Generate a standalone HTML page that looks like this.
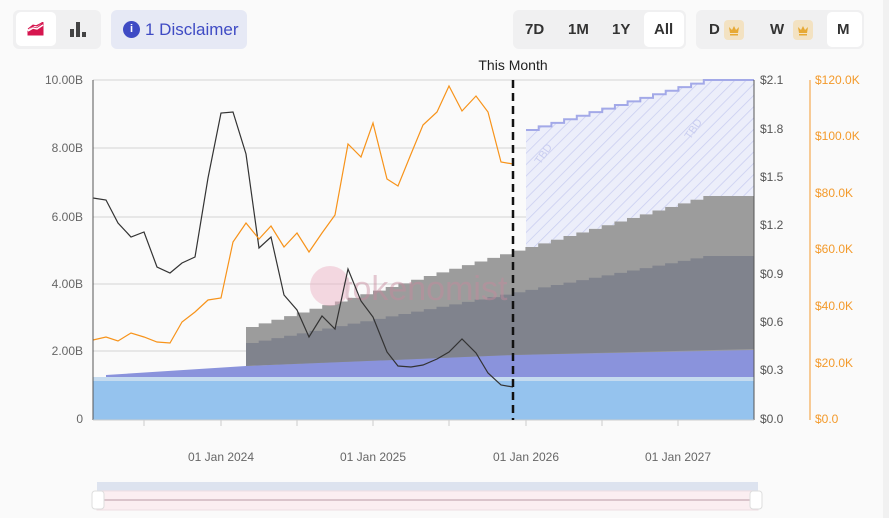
<!DOCTYPE html>
<html><head><meta charset="utf-8">
<style>
body{margin:0;width:889px;height:518px;background:#fafafa;font-family:"Liberation Sans",sans-serif;overflow:hidden;position:relative}
.grp{position:absolute;background:#f0f0f1;border-radius:6px}
.btn{position:absolute;font-weight:bold;font-size:15px;color:#333;text-align:center}
.sel{background:#fff;border-radius:5px}
.crown{display:inline-block;width:20px;height:20px;background:#f3e2c2;border-radius:4px;vertical-align:middle;position:relative;margin-left:4px}
</style></head><body>
<div class="grp" style="left:13px;top:10px;width:88px;height:39px"></div>
<div class="sel" style="position:absolute;left:16px;top:12px;width:40px;height:34px"></div>
<svg style="position:absolute;left:27px;top:22px" width="18" height="14" viewBox="0 0 18 14"><path d="M1 9 L6 5 L10 6 L16 1 L16 13 L1 13 Z M1 7 L6 3 L10 4 L16 0" fill="#d6164f" stroke="#d6164f" stroke-width="1"/><path d="M1 9 L6 6 L10 7 L16 3" stroke="#fff" stroke-width="1.5" fill="none"/></svg>
<svg style="position:absolute;left:70px;top:21px" width="16" height="16"><rect x="0" y="8" width="4" height="8" fill="#444"/><rect x="6" y="1" width="4" height="15" fill="#444"/><rect x="12" y="11" width="4" height="5" fill="#444"/></svg>
<div style="position:absolute;left:111px;top:10px;width:136px;height:39px;background:#e6e9f5;border-radius:6px"></div>
<div style="position:absolute;left:123px;top:21px;width:17px;height:17px;border-radius:50%;background:#3f4bc4;color:#fff;font-size:11px;font-weight:bold;text-align:center;line-height:17px">i</div>
<div style="position:absolute;left:145px;top:20px;font-size:17px;color:#3f4bc4">1 Disclaimer</div>

<div class="grp" style="left:513px;top:10px;width:173px;height:39px"></div>
<div class="sel" style="position:absolute;left:644px;top:12px;width:40px;height:35px"></div>
<div class="btn" style="left:525px;top:21px">7D</div>
<div class="btn" style="left:568px;top:21px">1M</div>
<div class="btn" style="left:612px;top:21px">1Y</div>
<div class="btn" style="left:654px;top:21px">All</div>
<div class="grp" style="left:696px;top:10px;width:168px;height:39px"></div>
<div class="sel" style="position:absolute;left:827px;top:12px;width:35px;height:35px"></div>
<div class="btn" style="left:709px;top:21px">D</div>
<div class="crown" style="position:absolute;left:724px;top:20px;margin:0"><svg width="20" height="20"><path d="M5 7 L8 10 L10 6 L12 10 L15 7 L14 13 L6 13 Z M6 14 H14 V15.5 H6 Z" fill="#e7a934"/></svg></div>
<div class="btn" style="left:770px;top:21px">W</div>
<div class="crown" style="position:absolute;left:793px;top:20px;margin:0"><svg width="20" height="20"><path d="M5 7 L8 10 L10 6 L12 10 L15 7 L14 13 L6 13 Z M6 14 H14 V15.5 H6 Z" fill="#e7a934"/></svg></div>
<div class="btn" style="left:837px;top:21px">M</div>
<div style="position:absolute;left:883px;top:0;width:6px;height:518px;background:#f1f1f1"></div>

<svg id="ch" style="position:absolute;left:0;top:0" width="889" height="518" font-family="Liberation Sans, sans-serif">
<defs><pattern id="hp" width="8" height="8" patternUnits="userSpaceOnUse" patternTransform="rotate(45)"><rect width="8" height="8" fill="#eceefa"/><line x1="0" y1="0" x2="0" y2="8" stroke="#c9cdf0" stroke-width="1.5"/></pattern></defs>
<g stroke="#dcdcdc" stroke-width="1.3">
<line x1="93" y1="80" x2="754" y2="80"/><line x1="93" y1="148" x2="754" y2="148"/><line x1="93" y1="217" x2="754" y2="217"/><line x1="93" y1="284" x2="754" y2="284"/><line x1="93" y1="351" x2="754" y2="351"/></g>
<g fill="#666" font-size="12" text-anchor="end">
<text x="83" y="84">10.00B</text><text x="83" y="152">8.00B</text><text x="83" y="221">6.00B</text><text x="83" y="288">4.00B</text><text x="83" y="355">2.00B</text><text x="83" y="423">0</text></g>
<g fill="#555" font-size="12">
<text x="760" y="84">$2.1</text><text x="760" y="133">$1.8</text><text x="760" y="181">$1.5</text><text x="760" y="229">$1.2</text><text x="760" y="278">$0.9</text><text x="760" y="326">$0.6</text><text x="760" y="374">$0.3</text><text x="760" y="423">$0.0</text></g>
<g fill="#f39a2b" font-size="12">
<text x="815" y="84">$120.0K</text><text x="815" y="140">$100.0K</text><text x="815" y="197">$80.0K</text><text x="815" y="253">$60.0K</text><text x="815" y="310">$40.0K</text><text x="815" y="367">$20.0K</text><text x="815" y="423">$0.0</text></g>
<line x1="810" y1="80" x2="810" y2="420" stroke="#f6b15f" stroke-width="1.3"/>
<g id="areas"></g>
<g opacity="0.45"><circle cx="330" cy="286" r="20" fill="#ecaec2"/><text x="343" y="300" font-size="34" fill="#c88a9e">tokenomist</text></g>
<rect x="93" y="377" width="661" height="43" fill="#95c3ee"/>
<rect x="93" y="377" width="661" height="4" fill="#c5dbef"/>
<polyline fill="none" stroke="#333" stroke-width="1.2" points="93,198 106,200 118,223 131,237 144,232 157,267 170,273 182,263 195,257 208,178 221,113 233,112 246,154 259,248 271,237 284,295 297,310 309,337 322,316 335,329 348,269 361,301 373,317 387,352 398,366 411,367 423,365 437,359 449,352 462,339 476,353 488,373 501,385 513,387"/>
<polyline fill="none" stroke="#f7931a" stroke-width="1.2" points="93,340 106,337 118,341 131,333 144,337 157,342 170,343 182,322 195,312 208,300 221,298 233,242 246,223 259,239 271,226 284,247 297,233 309,252 322,233 335,215 348,144 361,157 373,123 387,179 398,186 411,154 423,125 437,112 449,86 462,111 476,96 488,112 501,162 513,164"/>
<line x1="93" y1="80" x2="93" y2="420" stroke="#555"/>
<line x1="754" y1="80" x2="754" y2="420" stroke="#555"/>
<line x1="93" y1="420" x2="754" y2="420" stroke="#ccc"/>
<g stroke="#ccc"><line x1="144" y1="420" x2="144" y2="426"/><line x1="221" y1="420" x2="221" y2="426"/><line x1="297" y1="420" x2="297" y2="426"/><line x1="373" y1="420" x2="373" y2="426"/><line x1="449" y1="420" x2="449" y2="426"/><line x1="526" y1="420" x2="526" y2="426"/><line x1="602" y1="420" x2="602" y2="426"/><line x1="678" y1="420" x2="678" y2="426"/></g>
<line x1="513" y1="80" x2="513" y2="420" stroke="#111" stroke-width="2.5" stroke-dasharray="8,5"/>
<text x="513" y="70" text-anchor="middle" font-size="14" fill="#222">This Month</text>
<g fill="#666" font-size="12" text-anchor="middle"><text x="221" y="461">01 Jan 2024</text><text x="373" y="461">01 Jan 2025</text><text x="526" y="461">01 Jan 2026</text><text x="678" y="461">01 Jan 2027</text></g>
<rect x="97" y="482" width="661" height="9" fill="#dde3ef"/>
<rect x="97" y="491" width="661" height="19" fill="#fbeef1" stroke="#eedde2"/>
<line x1="100" y1="500" x2="755" y2="500" stroke="#b89aa5"/>
<rect x="92" y="491" width="12" height="18" rx="3" fill="#fff" stroke="#ddd"/>
<rect x="750" y="491" width="12" height="18" rx="3" fill="#fff" stroke="#ddd"/>
</svg>
<script>
(function(){
var g=document.getElementById('areas'),ns='http://www.w3.org/2000/svg';
function poly(pts,fill){var p=document.createElementNS(ns,'polygon');p.setAttribute('points',pts.map(function(a){return a.join(',')}).join(' '));p.setAttribute('fill',fill);g.appendChild(p);}
function steps(x0,x1,y0,yEnd,xFlat){var pts=[],s=12.7;var n=Math.round((xFlat-x0)/s);for(var i=0;i<=n;i++){var y=y0+(yEnd-y0)*i/n;var xa=x0+i*s,xb=Math.min(x0+(i+1)*s,x1);if(i==n)xb=x1;pts.push([xa,y],[xb,y]);}return pts;}
poly([[106,375],[246,366],[513,354],[754,347],[754,381],[106,381]],'#8a93dc');
var lg=steps(246,754,327,196,705);
poly(lg.concat([[754,350],[513,355],[246,366]]),'#9c9c9c');
var dg=steps(246,754,343,256,705);
poly(dg.concat([[754,349],[513,355],[246,366]]),'#80838d');
var tline=steps(526,754,130,80,705);
var lgr=lg.filter(function(p){return p[0]>526}).reverse();
poly(tline.concat([[754,196]]).concat(lgr).concat([[526,247]]),'url(#hp)');
var pl=document.createElementNS(ns,'polyline');pl.setAttribute('points',tline.map(function(a){return a.join(',')}).join(' '));pl.setAttribute('fill','none');pl.setAttribute('stroke','#a3a9e8');pl.setAttribute('stroke-width','2');g.appendChild(pl);
[[540,165],[690,140]].forEach(function(c){var t=document.createElementNS(ns,'text');t.setAttribute('x',c[0]);t.setAttribute('y',c[1]);t.setAttribute('font-size','11');t.setAttribute('fill','#c9cdf0');t.setAttribute('transform','rotate(-55 '+c[0]+' '+c[1]+')');t.textContent='TBD';g.appendChild(t);});
})();
</script>
</body></html>
